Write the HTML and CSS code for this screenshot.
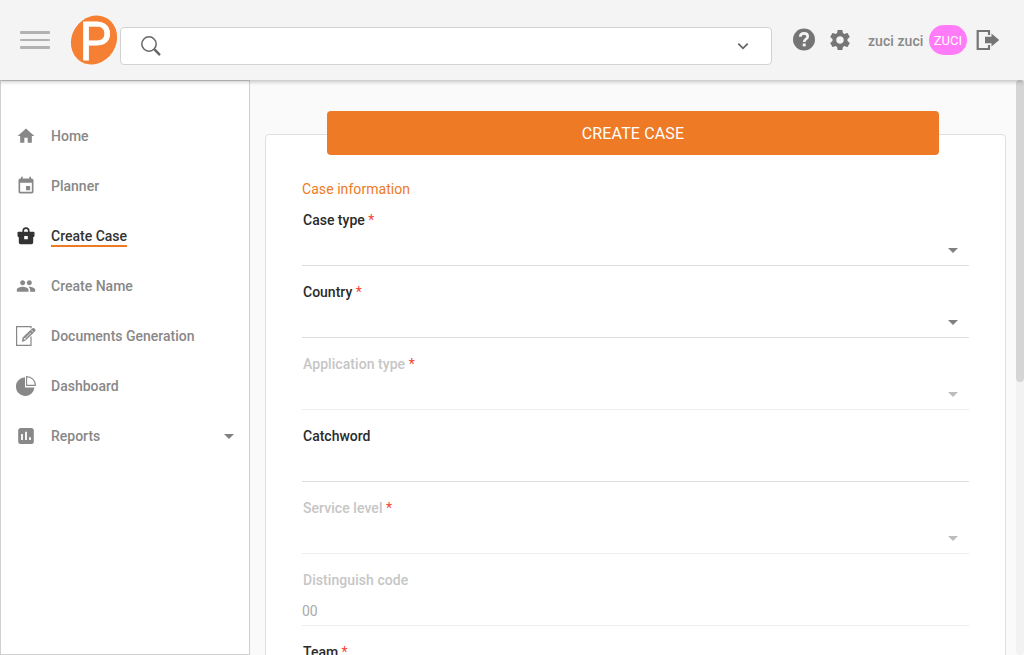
FILE: index.html
```html
<!DOCTYPE html>
<html lang="en">
<head>
<meta charset="utf-8">
<title>Create Case</title>
<link rel="stylesheet" href="styles.css">
</head>
<body>
<header class="topbar">
  <button class="menu" aria-label="Menu"><span></span><span></span><span></span></button>
  <svg class="logo" width="48" height="52" viewBox="0 0 48 52">
    <ellipse cx="24" cy="26" rx="25.3" ry="22.2" transform="rotate(-58 24 26)" fill="#f57f32"/>
    <text class="logo-letter" x="9.500" y="45.500" textLength="32" lengthAdjust="spacingAndGlyphs">P</text>
  </svg>
  <div class="search">
    <svg width="22" height="22" viewBox="0 0 22 22" fill="none" stroke="#666"><circle cx="9" cy="9" r="7.2" stroke-width="1.5"/><path d="M14 14l1.8 1.8" stroke-width="1.6"/><path d="M15.2 15.2l4.1 4.1" stroke-width="2.5" stroke-linecap="round"/></svg>
    <svg class="chevron" width="12" height="8" viewBox="0 0 12 8" fill="none" stroke="#666" stroke-width="1.800"><path d="M1.300 1.700L6 6.300l4.700-4.600"/></svg>
  </div>
  <div class="actions">
    <svg class="help" width="26" height="26" viewBox="0 0 26 26"><circle cx="13" cy="12.500" r="11" fill="#757575"/><path d="M9.300 9.700c.1-2.200 1.700-3.300 3.700-3.300 2.200 0 3.700 1.200 3.700 3.100 0 2.700-3.500 2.400-3.500 5.600" fill="none" stroke="#f4f4f4" stroke-width="2.700"/><rect x="11.700" y="16.500" width="3" height="2.900" fill="#f4f4f4"/></svg>
    <svg class="gear" width="24" height="24" viewBox="0 0 24 24" fill="#757575"><path d="M19.430 12.980c.040-.320.070-.640.070-.980s-.030-.660-.070-.980l2.110-1.650c.190-.150.240-.420.120-.640l-2-3.460c-.120-.220-.390-.3-.610-.220l-2.490 1c-.520-.4-1.080-.730-1.690-.980l-.380-2.650C14.460 2.180 14.250 2 14 2h-4c-.250 0-.460.180-.490.420l-.380 2.650c-.610.250-1.170.590-1.690.980l-2.490-1c-.230-.090-.490 0-.610.220l-2 3.460c-.130.220-.070.490.120.640l2.110 1.650c-.040.320-.070.650-.070.980s.030.660.070.980l-2.110 1.650c-.190.150-.240.420-.120.640l2 3.460c.120.220.390.3.610.220l2.490-1c.520.4 1.080.730 1.690.980l.380 2.650c.030.240.240.420.490.420h4c.250 0 .460-.180.490-.420l.380-2.650c.610-.250 1.170-.590 1.690-.980l2.490 1c.230.090.490 0 .610-.220l2-3.460c.120-.220.070-.490-.120-.640l-2.110-1.650zM12 15.800c-2.100 0-3.800-1.700-3.800-3.800s1.700-3.800 3.800-3.800 3.800 1.700 3.800 3.800-1.700 3.800-3.800 3.800z"/></svg>
    <span class="username">zuci zuci</span>
    <span class="avatar">ZUCI</span>
    <svg class="logout" width="24" height="22" viewBox="0 0 24 22"><path d="M13 6V2H1.700v18H13v-4" fill="none" stroke="#757575" stroke-width="2.200"/><path d="M9 7.800h6.500V4.600L23.200 11l-7.700 6.400v-3.200H9z" fill="#757575"/></svg>
  </div>
</header>
<div class="layout">
  <nav class="sidebar">
    <a class="item"><svg width="20" height="20" viewBox="0 0 24 24" fill="currentColor"><path d="M10 20v-6h4v6h5v-8h3L12 3 2 12h3v8z"/></svg><span>Home</span></a>
    <a class="item"><svg width="20" height="20" viewBox="0 0 24 24" fill="currentColor"><path d="M17 12h-5v5h5v-5zM16 1v2H8V1H6v2H5c-1.110 0-1.990.9-1.990 2L3 19c0 1.100.890 2 2 2h14c1.100 0 2-.9 2-2V5c0-1.100-.9-2-2-2h-1V1h-2zm3 18H5V8h14v11z"/></svg><span>Planner</span></a>
    <a class="item active"><svg width="20" height="20" viewBox="0 0 20 20"><path d="M7.200 6V4.900a2.800 2.800 0 0 1 5.600 0V6" fill="none" stroke="currentColor" stroke-width="1.600"/><path fill="currentColor" fill-rule="evenodd" d="M2.500 5.800h15q1 0 1 1v2.700q0 1.500-1.300 1.800v5.100q0 1.800-1.800 1.800H4.600q-1.800 0-1.800-1.800v-5.100Q1.500 11 1.500 9.500V6.800q0-1 1-1zM8.200 10v3.300h3.600V10z"/></svg><span>Create Case</span></a>
    <a class="item"><svg width="20" height="20" viewBox="0 0 24 24" fill="currentColor"><path d="M16 11c1.660 0 2.990-1.340 2.990-3S17.660 5 16 5s-3 1.340-3 3 1.340 3 3 3zm-8 0c1.660 0 2.990-1.340 2.990-3S9.660 5 8 5 5 6.340 5 8s1.340 3 3 3zm0 2c-2.330 0-7 1.170-7 3.500V19h14v-2.500c0-2.330-4.670-3.500-7-3.500zm8 0c-.290 0-.620.020-.970.050 1.160.840 1.970 1.970 1.970 3.450V19h6v-2.500c0-2.330-4.670-3.500-7-3.500z"/></svg><span>Create Name</span></a>
    <a class="item"><svg width="20" height="20" viewBox="0 0 20 20"><path d="M15 2.300V.6H.6v18.800H15v-9" fill="none" stroke="currentColor" stroke-width="1.200"/><path d="M5.800 16l1-4.700 9.300-8.700q1.300-1.100 2.700.1 1.300 1.400.1 2.700l-9.300 9z" fill="currentColor"/><path d="M7.800 13.800l7.400-7.300M7.800 11.700l1.900 2M15.500 4.200l2 2" fill="none" stroke="#fff" stroke-width=".8"/></svg><span>Documents Generation</span></a>
    <a class="item"><svg width="20" height="20" viewBox="0 0 20 20"><path d="M9 1.300A9.300 9.300 0 1 0 18.500 11.500H9z" fill="currentColor"/><path d="M10.600.6v8.800h8.800A8.800 8.800 0 0 0 10.600.6z" fill="none" stroke="currentColor" stroke-width="1.100"/></svg><span>Dashboard</span></a>
    <a class="item"><svg width="20" height="20" viewBox="0 0 20 20"><rect x="2.200" y="2" width="15.600" height="16" rx="2.500" fill="currentColor"/><path d="M6 8v6M10 5.800V14M14 11.300V14" fill="none" stroke="#fff" stroke-width="1.800"/></svg><span>Reports</span><i class="caret"></i></a>
  </nav>
  <main class="content">
    <section class="card">
      <h1 class="banner">CREATE CASE</h1>
      <h2 class="section-title">Case information</h2>
      <div class="field"><label>Case type <b>*</b></label><i class="caret"></i></div>
      <div class="field"><label>Country <b>*</b></label><i class="caret"></i></div>
      <div class="field disabled"><label>Application type <b>*</b></label><i class="caret"></i></div>
      <div class="field"><label>Catchword</label></div>
      <div class="field disabled"><label>Service level <b>*</b></label><i class="caret"></i></div>
      <div class="field disabled"><label>Distinguish code</label><span class="value">00</span></div>
      <div class="field"><label>Team <b>*</b></label><i class="caret"></i></div>
    </section>
  </main>
  <div class="scrollbar"><div class="thumb"></div></div>
</div>
</body>
</html>
```
FILE: styles.css
```css
* { box-sizing: border-box; }
body {
  margin: 0;
  height: 655px;
  overflow: hidden;
  display: flex;
  flex-direction: column;
  background: #fafafa;
  font-family: Roboto, "Liberation Sans", sans-serif;
  font-size: 14px;
  color: #333;
}
svg { display: block; flex: none; }
.topbar {
  position: relative;
  z-index: 1;
  flex: none;
  height: 80px;
  display: flex;
  align-items: center;
  background: #f4f4f4;
  box-shadow: 0 2px 4px rgba(0, 0, 0, .22);
}
.menu {
  width: 30px;
  margin-left: 20px;
  padding: 0;
  border: 0;
  background: none;
  display: grid;
  gap: 5.2px;
}
.menu span { height: 2.5px; border-radius: 1px; background: #b2b2b2; }
.logo { margin-left: 20px; overflow: visible; }
.logo-letter { font-size: 53px; fill: #fff; stroke: #fff; stroke-width: .8px; }
.search {
  width: 652px;
  height: 38px;
  margin: 12px 0 0 2px;
  padding: 0 22px 0 19px;
  display: flex;
  align-items: center;
  justify-content: space-between;
  background: #fff;
  border: 1px solid #d2d2d2;
  border-radius: 4px;
}
.actions { display: flex; align-items: center; }
.help { margin-left: 19px; }
.gear { margin-left: 11px; }
.username { margin-left: 16px; font-weight: 500; letter-spacing: .06px; color: #888; white-space: nowrap; padding-top: 2px; }
.avatar {
  width: 38px;
  height: 30px;
  margin-left: 5.5px;
  border-radius: 15px;
  background: #ff7bf8;
  color: #fff;
  font-size: 13px;
  line-height: 31px;
  text-align: center;
}
.logout { margin-left: 9px; }
.layout { flex: 1; min-height: 0; display: flex; }
.sidebar {
  width: 250px;
  padding-top: 30px;
  background: #fff;
  border: 1px solid #d0d0d0;
}
.item {
  height: 50px;
  padding: 0 15px;
  display: flex;
  align-items: center;
  color: #888;
  font-weight: 500;
}
.item span { margin-left: 15px; line-height: 18px; border-bottom: 2px solid transparent; padding-top: 2px; }
.item.active { color: #333; }
.item.active span { border-color: #ee7a25; }
.caret {
  margin-left: auto;
  border: 5px solid transparent;
  border-top-color: #808080;
  border-bottom: 0;
}
.content { flex: 1; padding: 54px 10px 0 15px; overflow: hidden; }
.card {
  height: 620px;
  padding: 0 36px;
  display: flex;
  flex-direction: column;
  background: #fff;
  border: 1px solid #e0e0e0;
  border-radius: 4px;
}
.banner {
  flex: none;
  width: 612px;
  height: 44px;
  margin: -24px 0 0 25px;
  border-radius: 4px;
  background: #ee7a25;
  color: #fff;
  font-size: 16px;
  font-weight: 400;
  line-height: 45px;
  letter-spacing: .15px;
  text-align: center;
}
.section-title {
  flex: none;
  height: 39px;
  margin: 0;
  padding-top: 24px;
  font-size: 14px;
  font-weight: 400;
  line-height: 20px;
  letter-spacing: .06px;
  color: #ee7a25;
}
.field {
  flex: none;
  width: 667px;
  height: 72px;
  padding: 17px 11px 0 1px;
  display: flex;
  flex-direction: column;
  border-bottom: 1px solid #dcdcdc;
}
.field label { line-height: 18px; font-weight: 500; color: #2b2b2b; }
.field b { color: #f44336; font-weight: 400; }
.field .caret { margin-top: 19px; }
.disabled { border-color: #ededed; }
.field.disabled label { color: #c6c6c6; font-weight: 500; letter-spacing: .06px; }
.disabled .caret { border-top-color: #bdbdbd; }
.value { margin: 13px 0 0 -1px; line-height: 18px; color: #aaa; }
.scrollbar { width: 8px; background: #f2f2f2; border-radius: 4px; }
.thumb { height: 302px; background: #d5d5d5; border-radius: 4px; }
```
